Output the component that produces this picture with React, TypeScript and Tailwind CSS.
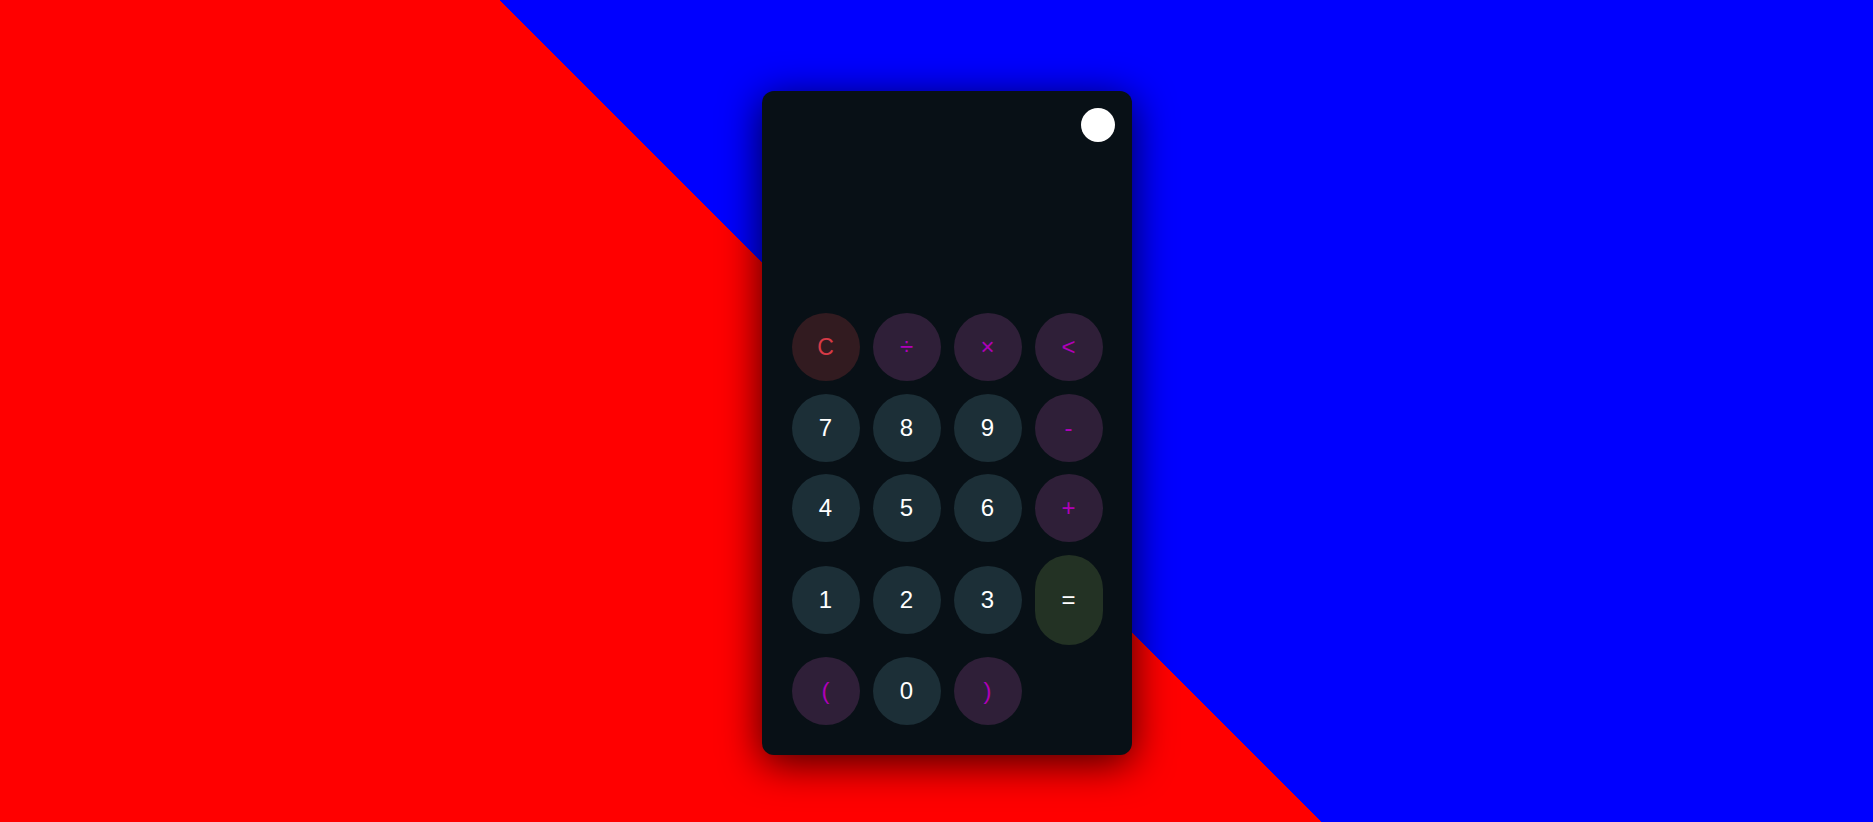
import React from "react";

type Key = { label: string; kind: "num" | "op" | "clear" | "eq" };

const ROWS: Key[][] = [
  [
    { label: "C", kind: "clear" },
    { label: "÷", kind: "op" },
    { label: "×", kind: "op" },
    { label: "<", kind: "op" },
  ],
  [
    { label: "7", kind: "num" },
    { label: "8", kind: "num" },
    { label: "9", kind: "num" },
    { label: "-", kind: "op" },
  ],
  [
    { label: "4", kind: "num" },
    { label: "5", kind: "num" },
    { label: "6", kind: "num" },
    { label: "+", kind: "op" },
  ],
  [
    { label: "1", kind: "num" },
    { label: "2", kind: "num" },
    { label: "3", kind: "num" },
    { label: "=", kind: "eq" },
  ],
  [
    { label: "(", kind: "op" },
    { label: "0", kind: "num" },
    { label: ")", kind: "op" },
  ],
];

const KIND_CLASS: Record<Key["kind"], string> = {
  num: "bg-[#1c2f37] text-white text-[24px] w-[68px] h-[68px]",
  op: "bg-[#2f1f38] text-[#b000b8] text-[24px] w-[68px] h-[68px]",
  clear: "bg-[#321b20] text-[#d63a46] text-[23px] w-[68px] h-[68px]",
  eq: "bg-[#233224] text-white text-[24px] w-[68px] h-[90px]",
};

export default function App() {
  return (
    <div className="min-h-screen w-full bg-[linear-gradient(45deg,#ff0000_49.02%,#0000ff_49.02%)] flex justify-center items-start pt-[91px] pl-[21px] font-['Liberation_Sans',Arial,sans-serif]">
      <div className="w-[370px] bg-[#081016] rounded-[12px] shadow-[0_8px_40px_rgba(0,0,0,0.75)] flex flex-col pb-[30px]">
        {/* display */}
        <div className="h-[222px] flex justify-end items-start pt-[17px] pr-[17px]">
          <button className="w-[34px] h-[34px] rounded-full bg-white" />
        </div>

        {/* keypad */}
        <div className="grid grid-cols-[repeat(4,68px)] grid-rows-[68px_68px_68px_90px_68px] gap-x-[13px] gap-y-[12.5px] justify-center items-center">
          {ROWS.flat().map((k, i) => (
            <button
              key={i}
              className={`rounded-full flex items-center justify-center leading-none ${KIND_CLASS[k.kind]}`}
            >
              {k.label}
            </button>
          ))}
        </div>
      </div>
    </div>
  );
}
